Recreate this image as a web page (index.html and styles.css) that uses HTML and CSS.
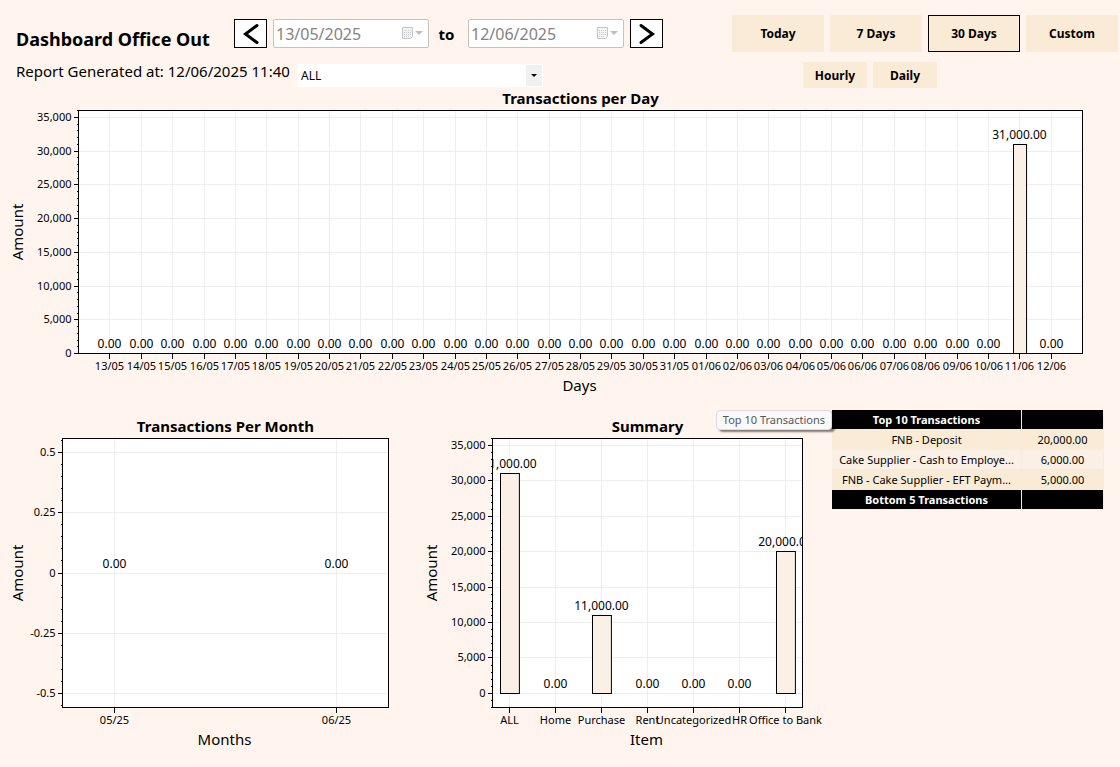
FILE: index.html
```html
<!DOCTYPE html>
<html lang="en">
<head>
  <meta charset="UTF-8" />
  <meta name="viewport" content="width=device-width, initial-scale=1.0"/>
  <title>Dashboard Office Out</title>
  <link rel="stylesheet" href="styles.css">
</head>
<body>
  <header class="header">
    <div class="period-row">
      <h1>Dashboard Office Out</h1>
      <button type="button" class="arrow-btn" aria-label="Previous period">
        <svg width="31" height="27" viewBox="0 0 31 27"><path d="M22 5.500 L10.500 14 L22 22.500" /></svg>
      </button>
      <div class="date-box">
        <input type="text" id="dateFrom" aria-label="From date" value="13/05/2025" disabled />
        <svg class="calendar" width="22" height="14" viewBox="0 0 22 14">
          <path class="page" d="M1.500 .5 h10 v9 l-2 2 h-8 z" />
          <path class="cells" d="M3 3.500h7 M3 5.500h7 M3 7.500h7 M3 9.500h5" />
          <path class="arrow" d="M14 4 h8 l-4 4 z" />
        </svg>
      </div>
      <label class="to" for="dateTo">to</label>
      <div class="date-box">
        <input type="text" id="dateTo" value="12/06/2025" disabled />
        <svg class="calendar" width="22" height="14" viewBox="0 0 22 14">
          <path class="page" d="M1.500 .5 h10 v9 l-2 2 h-8 z" />
          <path class="cells" d="M3 3.500h7 M3 5.500h7 M3 7.500h7 M3 9.500h5" />
          <path class="arrow" d="M14 4 h8 l-4 4 z" />
        </svg>
      </div>
      <button type="button" class="arrow-btn" aria-label="Next period">
        <svg width="31" height="27" viewBox="0 0 31 27"><path d="M10 5.500 L21.500 14 L10 22.500" /></svg>
      </button>
    </div>

    <div class="range-buttons">
      <button type="button" class="btn">Today</button>
      <button type="button" class="btn">7 Days</button>
      <button type="button" class="btn active">30 Days</button>
      <button type="button" class="btn">Custom</button>
    </div>

    <div class="report-row">
      <p>Report Generated at: 12/06/2025 11:40</p>
      <div class="select-box">
        <select id="category" aria-label="Category">
          <option value="all">ALL</option>
        </select>
      </div>
    </div>

    <div class="group-buttons">
      <button type="button" class="btn small">Hourly</button>
      <button type="button" class="btn small">Daily</button>
    </div>
  </header>

  <main>
    <svg class="chart" id="dayChart"></svg>

    <div class="bottom">
      <svg class="chart tall" id="monthChart"></svg>
      <svg class="chart tall" id="summaryChart"></svg>

      <div class="transactions">
        <div class="tooltip" role="tooltip">Top 10 Transactions</div>
        <table>
          <thead>
            <tr><th>Top 10 Transactions</th><th class="amount"></th></tr>
          </thead>
          <tbody>
            <tr><td>FNB - Deposit</td><td>20,000.00</td></tr>
            <tr><td>Cake Supplier - Cash to Employe...</td><td>6,000.00</td></tr>
            <tr><td>FNB - Cake Supplier - EFT Paym...</td><td>5,000.00</td></tr>
            <tr><th>Bottom 5 Transactions</th><th></th></tr>
          </tbody>
        </table>
      </div>
    </div>
  </main>

  <script src="charts.js"></script>
</body>
</html>
```
FILE: styles.css
```css
* {
  box-sizing: border-box;
}

body {
  margin: 0;
  background-color: #fff5ee;
  color: #000;
  font-family: 'Segoe UI', 'Noto Sans', 'Open Sans', sans-serif;
  font-size: 12px;
}

.header {
  display: grid;
  grid-template-columns: 1fr auto;
  row-gap: 10px;
  padding: 15px 2px 0 16px;
}

.period-row,
.report-row,
.range-buttons,
.group-buttons {
  display: flex;
  align-items: center;
  gap: 6px;
}

h1 {
  flex: 0 0 212px;
  margin: 0;
  padding-top: 12px;
  font-size: 18px;
  line-height: 25px;
  white-space: nowrap;
}

.arrow-btn {
  width: 33px;
  height: 29px;
  padding: 0;
  border: 1px solid #000;
  background-color: #fff;
  cursor: pointer;
}

.arrow-btn svg {
  display: block;
}

.arrow-btn path {
  fill: none;
  stroke: #000;
  stroke-width: 3;
  stroke-linecap: round;
}

.date-box {
  position: relative;
}

.date-box input {
  display: block;
  width: 156px;
  height: 29px;
  padding: 0 2px;
  border: 1px solid #c3c3c3;
  border-radius: 2px;
  background-color: #fff;
  color: #838383;
  font-family: inherit;
  font-size: 16px;
}

.calendar {
  position: absolute;
  top: 8px;
  right: 6px;
}

.calendar .page {
  fill: #f4f4f4;
  stroke: #c4c4c4;
}

.calendar .cells {
  stroke: #c8ccd0;
  stroke-dasharray: 1 1;
}

.calendar .arrow {
  fill: #bfbfb8;
}

.to {
  width: 27px;
  padding-right: 4px;
  text-align: center;
  font-size: 15px;
  font-weight: bold;
}

.btn {
  width: 92px;
  height: 37px;
  padding: 0;
  border: none;
  background-color: #faebd7;
  color: #000;
  font-family: inherit;
  font-size: 12px;
  font-weight: bold;
  cursor: pointer;
}

.btn.active {
  border: 1px solid #000;
}

.btn.small {
  width: 64px;
  height: 26px;
}

.group-buttons {
  padding-left: 71px;
}

.report-row p {
  flex: 0 0 275px;
  margin: 0;
  font-size: 15px;
  line-height: 18px;
  align-self: flex-start;
  white-space: nowrap;
}

.select-box {
  position: relative;
}

.select-box select {
  display: block;
  width: 246px;
  height: 23px;
  padding: 0 4px;
  border: none;
  border-radius: 0;
  appearance: none;
  background-color: #fff;
  color: #000;
  font-family: inherit;
  font-size: 12px;
}

.select-box::before {
  content: '';
  position: absolute;
  top: 1px;
  right: 1px;
  width: 16px;
  height: 21px;
  background-color: #f0f0f0;
  pointer-events: none;
}

.select-box::after {
  content: '';
  position: absolute;
  top: 10px;
  right: 6px;
  border: 3px solid transparent;
  border-top-color: #000;
  border-bottom: none;
  pointer-events: none;
}

.chart {
  display: block;
  width: 100%;
  height: 310px;
  margin-top: 2px;
  overflow: visible;
}

.chart.tall {
  height: 350px;
  margin-top: 0;
}

.chart .plot {
  fill: #fff;
}

.chart .frame {
  fill: none;
  stroke: #000;
}

.chart .grid {
  stroke: #eee;
}

.chart .tick {
  stroke: #000;
}

.chart .bar {
  fill: #faf0e6;
  stroke: #000;
}

.chart .frame,
.chart .grid,
.chart .tick {
  shape-rendering: crispEdges;
}

.chart text {
  text-anchor: middle;
  fill: #000;
}

.chart .title {
  font-size: 15px;
  font-weight: bold;
}

.chart .axis-title {
  font-size: 15px;
}

.chart .tick-label {
  font-size: 11px;
}

.chart .y-label {
  text-anchor: end;
}

.chart .value {
  font-size: 12px;
}

.bottom {
  display: grid;
  grid-template-columns: 414fr 418fr 288fr;
  margin-top: 10px;
}

.transactions {
  position: relative;
  margin-right: 16px;
  font-size: 11px;
}

.transactions table {
  width: 100%;
  border-spacing: 0;
  table-layout: fixed;
}

.transactions th,
.transactions td {
  height: 20px;
  padding: 0;
  border-right: 1px solid #faebd7;
  border-bottom: 1px solid #faebd7;
  text-align: center;
  line-height: 18px;
  white-space: nowrap;
}

.transactions th {
  background-color: #000;
  color: #fff;
}

.transactions .amount {
  width: 82px;
}

.transactions tbody tr:nth-child(odd) {
  background-color: #faebd7;
}

.transactions tbody tr:nth-child(even) {
  background-color: #faf0e6;
}

.tooltip {
  position: absolute;
  top: 0;
  right: 100%;
  padding: 0 6px;
  border: 1px solid #ddd;
  border-radius: 4px;
  background-color: #f9f9f9;
  box-shadow: 3px 2px 2px rgba(0, 0, 0, 0.5);
  color: #575757;
  line-height: 18px;
  white-space: nowrap;
}
```
FILE: charts.js
```js
const SVG_NS = 'http://www.w3.org/2000/svg';

function add(parent, tag, attrs, text) {
  const el = document.createElementNS(SVG_NS, tag);
  for (const key in attrs) {
    el.setAttribute(key, attrs[key]);
  }
  if (text !== undefined) {
    el.textContent = text;
  }
  parent.appendChild(el);
  return el;
}

function line(svg, cls, x1, y1, x2, y2) {
  add(svg, 'line', { class: cls, x1, y1, x2, y2 });
}

// centre a 1px line on a pixel
function snap(v) {
  return Math.floor(v) + 0.5;
}

function money(v) {
  return v.toLocaleString('en-US', { minimumFractionDigits: 2 });
}

function drawChart(id, opts) {
  const svg = document.getElementById(id);
  svg.replaceChildren();

  const left = opts.left + 0.5;
  const right = snap(svg.clientWidth - opts.marginRight);
  const top = opts.top + 0.5;
  const bottom = snap(svg.clientHeight - opts.marginBottom);
  const step = (right - left) / (opts.data.length - 1 + opts.pad * 2);
  const xOf = i => left + (i + opts.pad) * step;
  const yOf = v => bottom - (v - opts.min) / (opts.max - opts.min) * (bottom - top);
  const box = { x: left, y: top, width: right - left, height: bottom - top };

  add(svg, 'rect', { class: 'plot', ...box });
  const clip = add(svg, 'clipPath', { id: id + 'Clip' });
  add(clip, 'rect', box);

  // value axis, minor ticks first
  for (let i = Math.ceil(opts.min / opts.minor); i * opts.minor <= opts.max; i++) {
    const y = snap(yOf(i * opts.minor));
    line(svg, 'tick', left - 2, y, left, y);
  }
  for (let i = Math.ceil(opts.min / opts.major); i * opts.major <= opts.max; i++) {
    const value = i * opts.major || 0;
    const y = snap(yOf(value));
    line(svg, 'grid', left, y, right, y);
    line(svg, 'tick', left - 5, y, left, y);
    add(svg, 'text', { class: 'tick-label y-label', x: left - 7, y: y + 3.5 }, value.toLocaleString('en-US'));
  }

  opts.data.forEach((d, i) => {
    const x = snap(xOf(i));
    line(svg, 'grid', x, top, x, bottom);
    line(svg, 'tick', x, bottom, x, bottom + 5);
    add(svg, 'text', { class: 'tick-label', x, y: bottom + 16 }, d[0]);
  });

  const values = add(svg, 'g', { 'clip-path': `url(#${id}Clip)` });
  opts.data.forEach((d, i) => {
    const x = snap(xOf(i));
    const y = yOf(d[1]);
    if (d[1] > 0) {
      const w = step * 0.4 + 0.5;
      add(values, 'rect', { class: 'bar', x: snap(xOf(i) - w / 2), y: snap(y), width: w, height: snap(yOf(0)) - snap(y) });
    }
    add(values, 'text', { class: 'value', x, y: Math.floor(y) - 5 }, money(d[1]));
  });

  add(svg, 'rect', { class: 'frame', ...box });

  const midX = (left + right) / 2;
  const midY = (top + bottom) / 2;
  add(svg, 'text', { class: 'title', x: midX, y: top - 7 }, opts.title);
  add(svg, 'text', { class: 'axis-title', x: midX - 1, y: bottom + 37 }, opts.xTitle);
  add(svg, 'text', { class: 'axis-title', transform: `translate(${opts.yTitleX} ${midY}) rotate(-90)` }, 'Amount');
}

function dailyData() {
  const days = [];
  for (let i = 0; i < 31; i++) {
    const date = new Date(2025, 4, 13 + i);
    const label = String(date.getDate()).padStart(2, '0') + '/' + String(date.getMonth() + 1).padStart(2, '0');
    days.push([label, label === '11/06' ? 31000 : 0]);
  }
  return days;
}

function drawAll() {
  drawChart('dayChart', {
    title: 'Transactions per Day', xTitle: 'Days',
    left: 78, marginRight: 38, top: 20, marginBottom: 47, yTitleX: 23,
    min: 0, max: 36000, major: 5000, minor: 1000, pad: 1,
    data: dailyData()
  });

  drawChart('monthChart', {
    title: 'Transactions Per Month', xTitle: 'Months',
    left: 62, marginRight: 26, top: 28, marginBottom: 53, yTitleX: 23,
    min: -0.558, max: 0.558, major: 0.25, minor: 0.05, pad: 0.234,
    data: [['05/25', 0], ['06/25', 0]]
  });

  drawChart('summaryChart', {
    title: 'Summary', xTitle: 'Item',
    left: 78, marginRight: 30, top: 28, marginBottom: 53, yTitleX: 23,
    min: -2000, max: 36000, major: 5000, minor: 1000, pad: 0.37,
    data: [['ALL', 31000], ['Home', 0], ['Purchase', 11000], ['Rent', 0], ['Uncategorized', 0], ['HR', 0], ['Office to Bank', 20000]]
  });
}

drawAll();
window.addEventListener('resize', drawAll);
```
